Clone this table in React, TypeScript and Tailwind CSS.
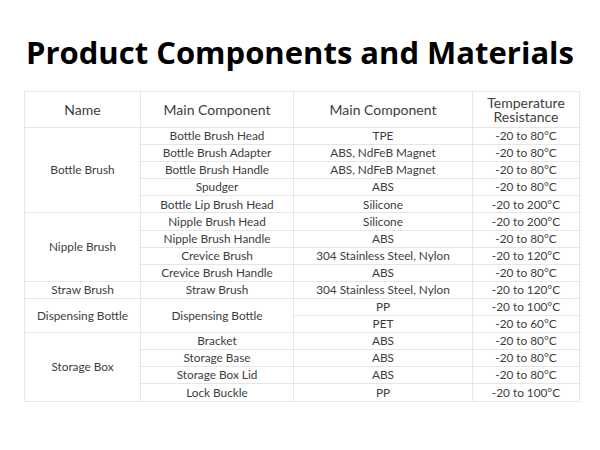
import React from "react";

type Row = { name?: string; span?: number; part?: string; partSpan?: number; mat: string; temp: string };

const rows: Row[] = [
  { name: "Bottle Brush", span: 5, part: "Bottle Brush Head", mat: "TPE", temp: "-20 to 80°C" },
  { part: "Bottle Brush Adapter", mat: "ABS, NdFeB Magnet", temp: "-20 to 80°C" },
  { part: "Bottle Brush Handle", mat: "ABS, NdFeB Magnet", temp: "-20 to 80°C" },
  { part: "Spudger", mat: "ABS", temp: "-20 to 80°C" },
  { part: "Bottle Lip Brush Head", mat: "Silicone", temp: "-20 to 200°C" },
  { name: "Nipple Brush", span: 4, part: "Nipple Brush Head", mat: "Silicone", temp: "-20 to 200°C" },
  { part: "Nipple Brush Handle", mat: "ABS", temp: "-20 to 80°C" },
  { part: "Crevice Brush", mat: "304 Stainless Steel, Nylon", temp: "-20 to 120°C" },
  { part: "Crevice Brush Handle", mat: "ABS", temp: "-20 to 80°C" },
  { name: "Straw Brush", span: 1, part: "Straw Brush", mat: "304 Stainless Steel, Nylon", temp: "-20 to 120°C" },
  { name: "Dispensing Bottle", span: 2, part: "Dispensing Bottle", partSpan: 2, mat: "PP", temp: "-20 to 100°C" },
  { mat: "PET", temp: "-20 to 60°C" },
  { name: "Storage Box", span: 4, part: "Bracket", mat: "ABS", temp: "-20 to 80°C" },
  { part: "Storage Base", mat: "ABS", temp: "-20 to 80°C" },
  { part: "Storage Box Lid", mat: "ABS", temp: "-20 to 80°C" },
  { part: "Lock Buckle", mat: "PP", temp: "-20 to 100°C" },
];

const cell = "border border-[#e6e6e6] text-center p-0 leading-none";

export default function App() {
  return (
    <div className="w-[600px] h-[450px] bg-white">
      <h1
        className="pt-[34px] text-center text-[31px] font-bold text-black leading-[36px]"
        style={{ fontFamily: "'Open Sans', sans-serif" }}
      >
        Product Components and Materials
      </h1>
      <table
        className="mt-[21px] ml-[24px] w-[555px] border-collapse table-fixed text-[11.8px] text-[#3d3d3d] border border-[#dcdcdc]"
        style={{ fontFamily: "Lato, sans-serif" }}
      >
        <colgroup>
          <col className="w-[116px]" />
          <col className="w-[153px]" />
          <col className="w-[179px]" />
          <col className="w-[107px]" />
        </colgroup>
        <thead>
          <tr className="h-[36px] text-[14px]">
            <th className={`${cell} font-normal`}>Name</th>
            <th className={`${cell} font-normal`}>Main Component</th>
            <th className={`${cell} font-normal`}>Main Component</th>
            <th className={`${cell} font-normal leading-[16px]`}>
              Temperature
              <br />
              Resistance
            </th>
          </tr>
        </thead>
        <tbody>
          {rows.map((r, i) => (
            <tr key={i} className="h-[17.1px]">
              {r.name && (
                <td rowSpan={r.span} className={cell}>
                  {r.name}
                </td>
              )}
              {r.part && (
                <td rowSpan={r.partSpan ?? 1} className={cell}>
                  {r.part}
                </td>
              )}
              <td className={cell}>{r.mat}</td>
              <td className={cell}>{r.temp}</td>
            </tr>
          ))}
        </tbody>
      </table>
    </div>
  );
}
